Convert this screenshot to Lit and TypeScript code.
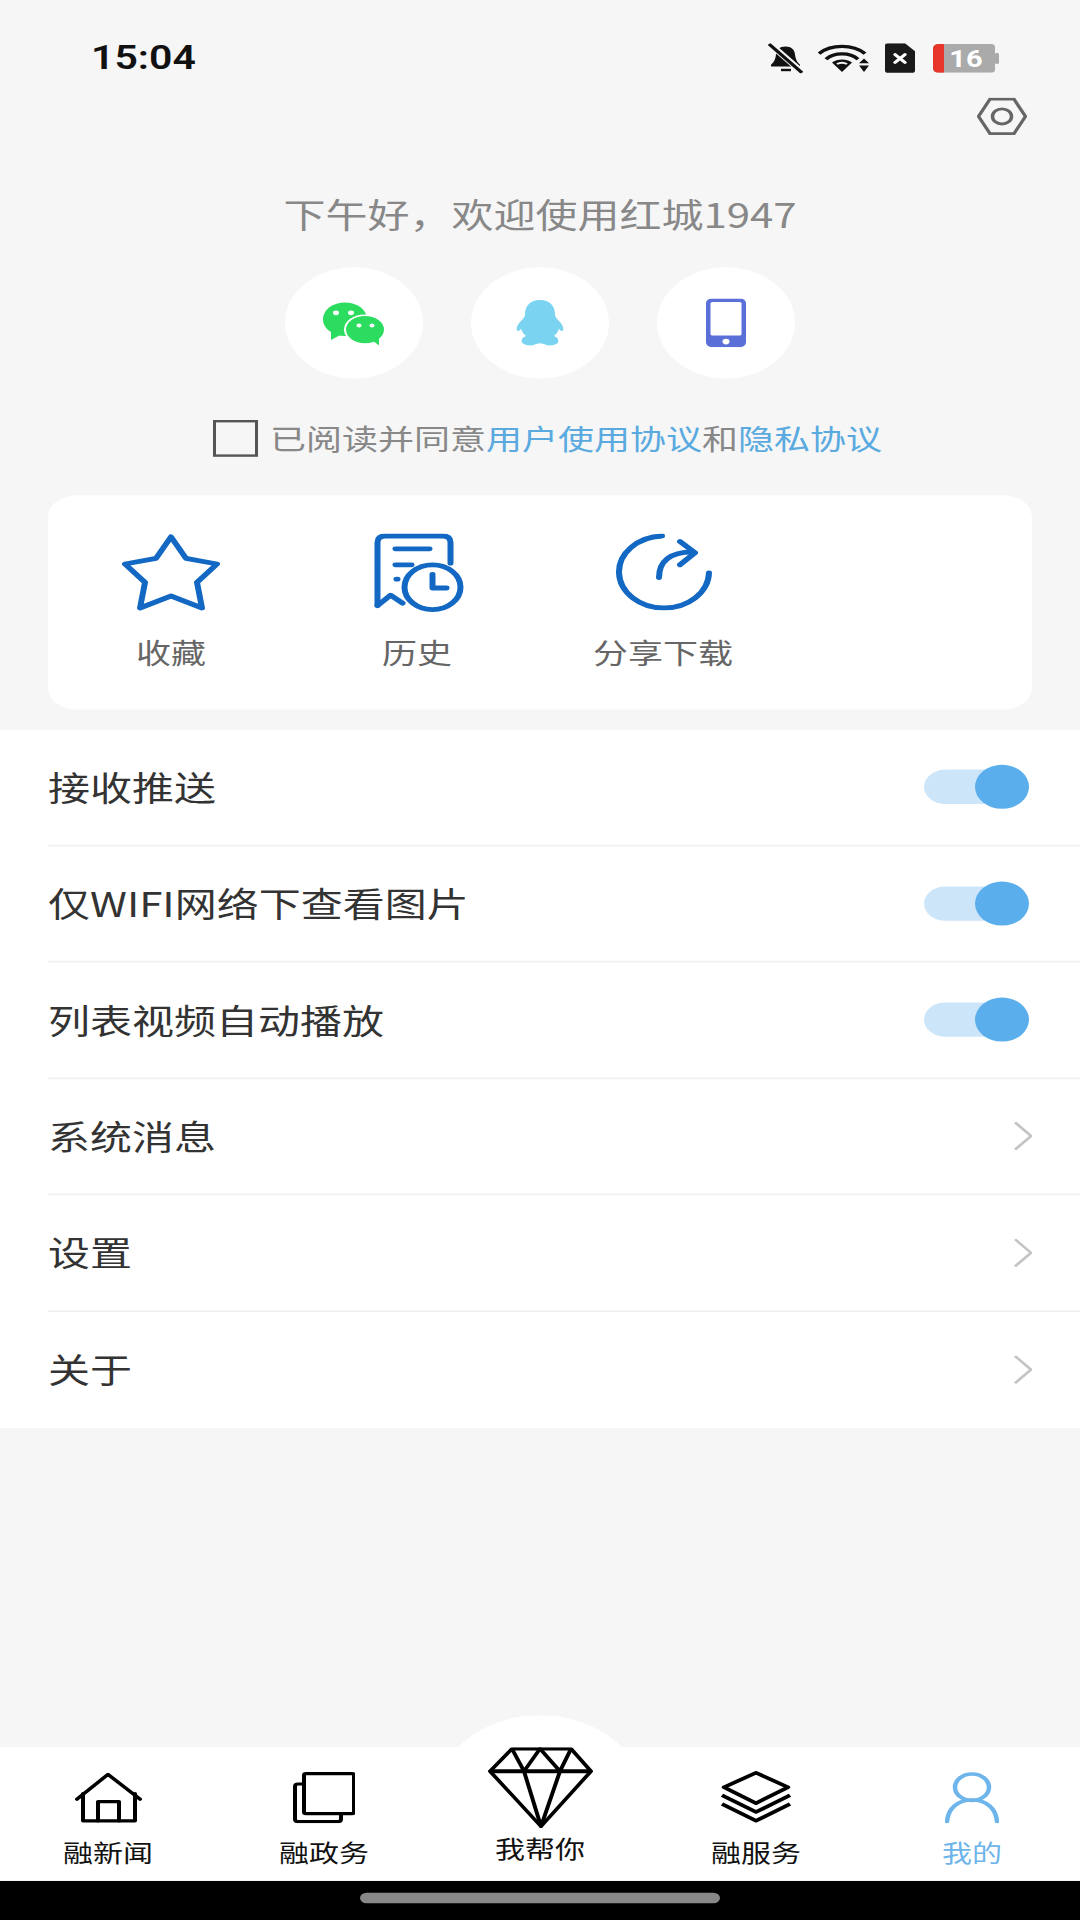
import { LitElement, html, css, svg } from 'lit';
import { customElement } from 'lit/decorators.js';

const switches = ['接收推送', '仅WIFI网络下查看图片', '列表视频自动播放'];
const links = ['系统消息', '设置', '关于'];

const shortcuts = [
  {
    label: '收藏',
    icon: svg`<svg width="98" height="98" viewBox="0 0 98 98" fill="none" stroke="#1268c2" stroke-width="6" stroke-linejoin="round" stroke-linecap="round">
      <path d="M49 4 L64 31 L95 38 L75 61 L80 93 L49 78 L18 93 L23 61 L3 38 L34 31 Z"/>
    </svg>`,
  },
  {
    label: '历史',
    icon: svg`<svg width="98" height="98" viewBox="-6.5 0 98 98" fill="none" stroke="#1268c2" stroke-width="6" stroke-linecap="round" stroke-linejoin="round">
      <path d="M3 90 V11 Q3 3 11 3 H68 Q76 3 76 11 V37"/>
      <path d="M3 90 L16 77 L28 87"/>
      <path d="M21 19 H55 M21 39 H37 M22 57 H23"/>
      <circle cx="58" cy="67" r="28"/>
      <path d="M58 51 V68 H72"/>
    </svg>`,
  },
  {
    label: '分享下载',
    icon: svg`<svg width="98" height="98" viewBox="-2 0 98 98" fill="none" stroke="#1268c2" stroke-width="6" stroke-linecap="round" stroke-linejoin="round">
      <path d="M46 3 A45 45 0 1 0 93 49"/>
      <path d="M43 55 C43 35 54 23 76 23"/>
      <path d="M64 10 L79 24 L64 39"/>
    </svg>`,
  },
];

const tabs = [
  {
    label: '融新闻',
    icon: svg`<svg width="67" height="63" viewBox="0 0 67 63" fill="none" stroke="#000" stroke-width="4" stroke-linejoin="round" stroke-linecap="round">
      <path d="M2 33 L33 2 L65 33"/>
      <path d="M8 26 V60 H60 V26"/>
      <path d="M23 60 V36 H44 V60"/>
    </svg>`,
  },
  {
    label: '融政务',
    icon: svg`<svg width="62" height="64" viewBox="0 0 62 64" fill="none" stroke="#000" stroke-width="4" stroke-linejoin="round">
      <rect x="11" y="2" width="50" height="50" rx="2"/>
      <path d="M11 15 H5 Q2 15 2 18 V59 Q2 62 5 62 H45 Q48 62 48 59 V52"/>
    </svg>`,
  },
  {
    label: '我帮你',
    center: true,
    icon: svg`<svg width="105" height="101" viewBox="0 0 105 101" fill="none" stroke="#000" stroke-width="4" stroke-linejoin="round">
      <path d="M24 2 H83 L103 30 L53 99 L2 30 Z"/>
      <path d="M2 30 H103" stroke-width="5"/>
      <path d="M24 2 L36 30 L52 2 L72 30 L83 2"/>
      <path d="M36 30 L53 99 L72 30"/>
    </svg>`,
  },
  {
    label: '融服务',
    icon: svg`<svg width="72" height="66" viewBox="0 0 72 66" fill="none" stroke="#000" stroke-width="4.5" stroke-linejoin="round">
      <path d="M36 3 L68 21 L36 41 L4 21 Z"/>
      <path d="M2 31 L36 52 L70 31"/>
      <path d="M2 42 L36 63 L70 42"/>
    </svg>`,
  },
  {
    label: '我的',
    active: true,
    icon: svg`<svg width="54" height="64" viewBox="0 0 54 64" fill="none" stroke="#6db5ea" stroke-width="4.5" stroke-linecap="round">
      <ellipse cx="27" cy="19" rx="17" ry="16.5"/>
      <path d="M2 62 C3 45 13 35 27 35 C41 35 51 45 52 62"/>
    </svg>`,
  },
];

@customElement('app-root')
export class AppRoot extends LitElement {
  static styles = css`
    :host {
      display: block;
      width: 1080px;
      height: 1920px;
      overflow: hidden;
      font-family: "Noto Sans CJK SC", "Noto Sans", sans-serif;
    }
    /* the whole screen is built at 1080x2400 and squeezed to fit */
    .page {
      width: 1080px;
      height: 2400px;
      transform: scaleY(0.8);
      transform-origin: top left;
      display: flex;
      flex-direction: column;
      background: #f6f6f6;
    }
    .status {
      height: 80px;
      margin-top: 32px;
      padding: 0 33px 0 91px;
      display: flex;
      align-items: center;
    }
    .time {
      font-family: Roboto, sans-serif;
      font-weight: 600;
      font-size: 41px;
      color: #111;
      flex: 1;
    }
    .status-icons {
      display: flex;
      align-items: center;
      gap: 15px;
      margin-right: 48px;
      padding-top: 2px;
    }
    .status-icons svg {
      display: block;
    }
    .status-icons .battery {
      margin-left: 3px;
    }
    .gear-row {
      margin-top: 10px;
      height: 47px;
      padding-right: 53px;
      display: flex;
      justify-content: flex-end;
    }
    .greeting {
      margin-top: 68px;
      font-size: 42px;
      line-height: 60px;
      color: #888;
      text-align: center;
    }
    .logins {
      margin-top: 37px;
      display: flex;
      justify-content: center;
      gap: 48px;
    }
    .login {
      width: 138px;
      height: 139px;
      border-radius: 50%;
      background: #fff;
      display: flex;
      align-items: center;
      justify-content: center;
    }
    .agree {
      margin-top: 52px;
      height: 46px;
      padding-left: 213px;
      display: flex;
      align-items: center;
      gap: 12px;
      font-size: 36px;
      color: #888;
      white-space: nowrap;
    }
    .agree span {
      margin-bottom: 3px;
    }
    .box {
      width: 45px;
      height: 46px;
      box-sizing: border-box;
      border: 3px solid #555;
    }
    .agree a {
      color: #5aaadf;
    }
    .card {
      margin: 48px 48px 0;
      height: 268px;
      background: #fff;
      border-radius: 28px;
      display: grid;
      grid-template-columns: repeat(4, 1fr);
      padding-top: 48px;
      box-sizing: border-box;
    }
    .shortcut {
      display: flex;
      flex-direction: column;
      align-items: center;
      font-size: 35px;
      line-height: 50px;
      color: #666;
    }
    .shortcut svg {
      display: block;
      margin-bottom: 25px;
    }
    .list {
      margin-top: 25px;
      background: #fff;
    }
    .row {
      height: 145.5px;
      box-sizing: border-box;
      margin-left: 48px;
      padding-right: 48px;
      display: flex;
      align-items: center;
      justify-content: space-between;
      font-size: 42px;
      color: #333;
      border-bottom: 2px solid #efefef;
    }
    .row span {
      margin-bottom: 3px;
    }
    .row:last-child {
      border-bottom: none;
    }
    .toggle {
      position: relative;
      width: 96px;
      height: 43px;
      border-radius: 22px;
      background: #cde5f9;
      margin-right: 12px;
    }
    .toggle::after {
      content: '';
      position: absolute;
      right: -9px;
      top: -6px;
      width: 54px;
      height: 55px;
      border-radius: 50%;
      background: #5aaeec;
    }
    .chevron {
      display: block;
    }
    .spacer {
      flex: 1;
    }
    .nav {
      position: relative;
      height: 167px;
      background: #fff;
      display: grid;
      grid-template-columns: repeat(5, 1fr);
    }
    .nav::before {
      content: '';
      position: absolute;
      left: 436px;
      top: -40px;
      width: 208px;
      height: 208px;
      border-radius: 50%;
      background: #fff;
      clip-path: inset(0 0 100px 0);
    }
    .tab {
      position: relative;
      display: flex;
      flex-direction: column;
      justify-content: flex-end;
      align-items: center;
      padding-bottom: 27px;
      font-size: 30px;
      line-height: 40px;
      color: #111;
    }
    .tab svg {
      display: block;
      margin-bottom: 16px;
    }
    .tab.center {
      padding-bottom: 32px;
    }
    .tab.center svg {
      margin-bottom: 5px;
    }
    .tab.active {
      color: #6db5ea;
    }
    .home-bar {
      height: 49px;
      background: #000;
      display: flex;
      justify-content: center;
      padding-top: 15px;
      box-sizing: border-box;
    }
    .home-bar div {
      width: 360px;
      height: 13px;
      border-radius: 7px;
      background: #888;
    }
  `;

  statusIcons() {
    return html`<div class="status-icons">
      <svg width="35" height="38" viewBox="0 0 35 38">
        <path fill="#111" d="M17.5 4c-6 0-9 4-9.5 10-.4 5-1.5 9-5 13v2h29v-2c-3.500-4-4.600-8-5-13-.5-6-3.500-10-9.500-10z"/>
        <rect x="13" y="32" width="10" height="3" fill="#111"/>
        <path d="M1 0 L35 37" stroke="#f6f6f6" stroke-width="7"/>
        <path d="M1 1 L34 37" stroke="#111" stroke-width="3.500"/>
      </svg>
      <svg width="52" height="38" viewBox="0 0 52 38" fill="none">
        <path d="M1 13 C13 1 35 1 47 13" stroke="#111" stroke-width="4"/>
        <path d="M8 20 C16 11 32 11 40 20" stroke="#111" stroke-width="4"/>
        <path fill="#111" d="M14 24 C19 19 29 19 34 24 L24 36 Z"/>
        <path d="M19 26 C22 24 26 24 29 26" stroke="#f6f6f6" stroke-width="2.500"/>
        <path fill="#111" d="M46 19 L51 25 H41 Z M41 28 H51 L46 36 Z"/>
      </svg>
      <svg width="30" height="38" viewBox="0 0 30 38">
        <path fill="#1a1a1a" d="M3 0 H20 L30 10 V34 Q30 37 27 37 H3 Q0 37 0 34 V3 Q0 0 3 0 Z"/>
        <path d="M10 14 L20 24 M20 14 L10 24" stroke="#fff" stroke-width="3.500" stroke-linecap="round"/>
      </svg>
      <svg class="battery" width="66" height="36" viewBox="0 0 66 36">
        <path fill="#aaa" d="M6 0 H58 Q62 0 62 4 V32 Q62 36 58 36 H6 Q0 36 0 30 V6 Q0 0 6 0 Z"/>
        <rect x="62" y="11" width="4" height="14" rx="2" fill="#aaa"/>
        <path fill="#e8352b" d="M6 0 H11 V36 H6 Q0 36 0 30 V6 Q0 0 6 0 Z"/>
        <text x="33" y="29" text-anchor="middle" font-family="Roboto, sans-serif" font-weight="700" font-size="29" fill="#fff">16</text>
      </svg>
    </div>`;
  }

  render() {
    return html`
      <div class="page">
        <div class="status">
          <span class="time">15:04</span>
          ${this.statusIcons()}
        </div>
        <div class="gear-row">
          <svg width="50" height="47" viewBox="0 0 50 47" fill="none" stroke="#666" stroke-width="3.500">
            <path d="M1.500 23.500 L13 2 H37 L48.500 23.500 L37 45 H13 Z"/>
            <circle cx="25" cy="23.500" r="9.500"/>
          </svg>
        </div>
        <div class="greeting">下午好，欢迎使用红城1947</div>
        <div class="logins">
          <div class="login">
            <svg width="62" height="56" viewBox="0 0 62 56">
              <ellipse cx="22" cy="23" rx="22" ry="21" fill="#2bdc5e"/>
              <path d="M8 36 L8 49 L20 41 Z" fill="#2bdc5e"/>
              <circle cx="13" cy="15" r="3" fill="#fff"/>
              <circle cx="28" cy="15" r="3" fill="#fff"/>
              <ellipse cx="42" cy="36" rx="20" ry="18" fill="#2bdc5e" stroke="#fff" stroke-width="2"/>
              <path d="M50 50 L56 56 L56 46 Z" fill="#2bdc5e"/>
              <circle cx="36" cy="31" r="2.500" fill="#fff"/>
              <circle cx="49" cy="31" r="2.500" fill="#fff"/>
            </svg>
          </div>
          <div class="login">
            <svg width="48" height="58" viewBox="0 0 48 58">
              <path fill="#7ad3f0" d="M24 0 C13 0 9 9 9 18 C9 20 8 22 6 25 C2 30 0 34 1 38 C2 40 4 38 5 36 C6 40 8 43 10 45 C6 47 5 50 6 53 C8 57 17 58 20 55 L24 54 L28 55 C31 58 40 57 42 53 C43 50 42 47 38 45 C40 43 42 40 43 36 C44 38 46 40 47 38 C48 34 46 30 42 25 C40 22 39 20 39 18 C39 9 35 0 24 0Z"/>
            </svg>
          </div>
          <div class="login">
            <svg width="40" height="61" viewBox="0 0 40 61">
              <rect width="40" height="61" rx="6" fill="#5a6fd8"/>
              <rect x="4.500" y="4.500" width="31" height="42" rx="2" fill="#fff"/>
              <circle cx="20" cy="54" r="3.500" fill="#fff"/>
            </svg>
          </div>
        </div>
        <div class="agree">
          <div class="box"></div>
          <span>已阅读并同意<a>用户使用协议</a>和<a>隐私协议</a></span>
        </div>
        <div class="card">
          ${shortcuts.map((s) => html`<div class="shortcut">${s.icon}<span>${s.label}</span></div>`)}
        </div>
        <div class="list">
          ${switches.map((t) => html`<div class="row"><span>${t}</span><div class="toggle"></div></div>`)}
          ${links.map(
            (t) => html`<div class="row">
              <span>${t}</span>
              <svg class="chevron" width="18" height="36" viewBox="0 0 18 36" fill="none" stroke="#c4c4c4" stroke-width="3">
                <path d="M1 1 L17 18 L1 35"/>
              </svg>
            </div>`
          )}
        </div>
        <div class="spacer"></div>
        <div class="nav">
          ${tabs.map(
            (t) => html`<div class="tab ${t.center ? 'center' : ''} ${t.active ? 'active' : ''}">
              ${t.icon}<span>${t.label}</span>
            </div>`
          )}
        </div>
        <div class="home-bar"><div></div></div>
      </div>
    `;
  }
}
